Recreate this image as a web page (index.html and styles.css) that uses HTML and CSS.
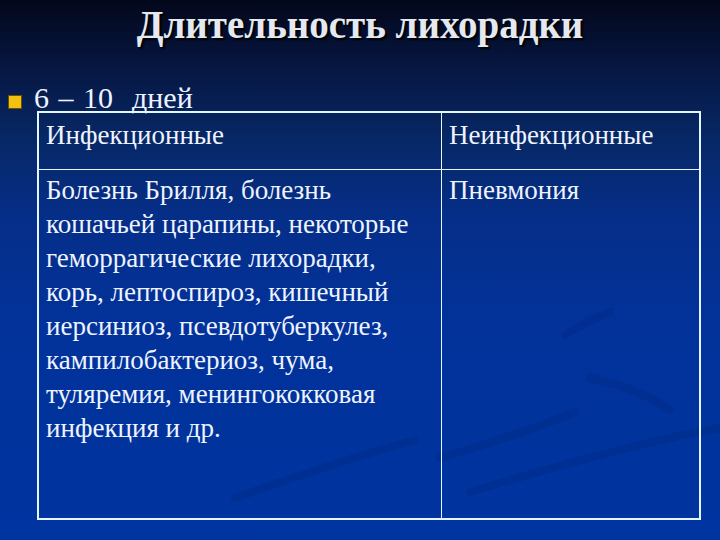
FILE: index.html
```html
<!DOCTYPE html>
<html lang="ru">
<head>
<meta charset="utf-8">
<link rel="stylesheet" href="styles.css">
</head>
<body>
<div class="slide">
  <svg class="swoosh" width="720" height="540" viewBox="0 0 720 540">
    <path d="M440 458 C 500 440, 545 425, 575 412" />
    <path d="M565 335 C 580 325, 595 318, 610 312" />
    <path d="M590 378 C 620 385, 650 395, 670 410" />
    <path d="M470 492 C 560 465, 650 440, 720 428" />
    <path d="M235 498 C 300 475, 360 455, 415 440" />
  </svg>
  <h1 class="title">Длительность лихорадки</h1>
  <div class="bullet">
    <span class="marker"></span>
    <span class="bullet-text">6 – 10&nbsp; дней</span>
  </div>
  <table class="grid">
    <tr class="head">
      <td class="col-a">Инфекционные</td>
      <td class="col-b">Неинфекционные</td>
    </tr>
    <tr class="body">
      <td class="col-a">Болезнь Брилля, болезнь<br>кошачьей царапины, некоторые<br>геморрагические лихорадки,<br>корь, лептоспироз, кишечный<br>иерсиниоз, псевдотуберкулез,<br>кампилобактериоз, чума,<br>туляремия, менингококковая<br>инфекция и др.</td>
      <td class="col-b">Пневмония</td>
    </tr>
  </table>
</div>
</body>
</html>
```
FILE: styles.css
```css
html, body {
  margin: 0;
  padding: 0;
}
body {
  background: #0033a0;
}
.slide {
  position: relative;
  width: 720px;
  height: 540px;
  overflow: hidden;
  background: linear-gradient(to bottom, #03071a 0%, #061640 12%, #072764 25%, #052e88 40%, #02329a 60%, #0034a0 100%);
  font-family: "Liberation Serif", Tinos, "Times New Roman", "DejaVu Serif", "Noto Serif", serif;
  color: #eef4ff;
}
.swoosh {
  position: absolute;
  left: 0;
  top: 0;
}
.swoosh path {
  fill: none;
  stroke: #00287e;
  stroke-width: 8;
  stroke-linecap: round;
  opacity: 0.35;
}
.title {
  position: relative;
  margin: 0;
  padding-top: 4px;
  height: 78px;
  box-sizing: border-box;
  text-align: center;
  font-size: 39px;
  font-weight: bold;
  line-height: 42px;
  color: #e6e8f0;
  text-shadow: 2px 2px 2px #000;
}
.bullet {
  position: relative;
  display: flex;
  align-items: center;
  height: 33px;
  padding-left: 8px;
}
.marker {
  flex: none;
  width: 12px;
  height: 12px;
  background: #f2c20e;
  border: 1px solid #6a5000;
  margin-top: 14px;
}
.bullet-text {
  margin-left: 12px;
  font-size: 30px;
  line-height: 30px;
  margin-top: 7px;
  word-spacing: 2px;
}
.grid {
  position: relative;
  margin-left: 37px;
  width: 664px;
  border-collapse: collapse;
  border: 2px solid #e4f6ff;
}
.grid td {
  border: 1px solid #e4f6ff;
  vertical-align: top;
  padding: 5px 7px 0 7px;
  font-size: 27px;
  line-height: 34px;
  color: #eef4ff;
}
.grid .col-a {
  width: 388px;
}
.head td {
  height: 51px;
}
.body td {
  height: 345px;
  padding-top: 3px;
}
```
